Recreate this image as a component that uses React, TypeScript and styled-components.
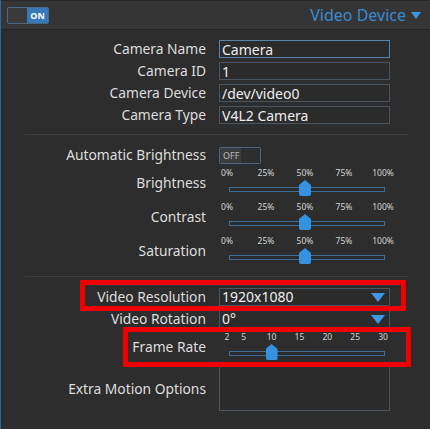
import React from 'react';
import styled, { createGlobalStyle } from 'styled-components';

const GlobalStyle = createGlobalStyle`
  html, body { margin: 0; padding: 0; background: #2d2d2d; }
  body { font-family: "Noto Sans", "Open Sans", sans-serif; }
  * { box-sizing: border-box; }
`;

const Page = styled.div`
  position: relative;
  width: 430px;
  height: 429px;
  background: #2d2d2d;
  border-left: 1px solid #2a66a8;
  overflow: hidden;
`;

const Header = styled.div`
  height: 30px;
  display: flex;
  align-items: center;
  justify-content: space-between;
  padding: 0 9px 0 6px;
  background: #353535;
  border-top: 1px solid #282828;
  border-bottom: 1px solid #242424;
`;

const Toggle = styled.div`
  width: 42px;
  height: 17px;
  display: flex;
  border: 1px solid #4a6784;
  border-radius: 2px;
  overflow: hidden;
`;

const ToggleKnob = styled.div<{ $on?: boolean }>`
  flex: 1;
  background: ${p => (p.$on ? '#3a3a3a' : '#2e2e2e')};
`;

const ToggleText = styled.div<{ $on?: boolean }>`
  width: 21px;
  display: flex;
  align-items: center;
  justify-content: ${p => (p.$on ? 'center' : 'flex-start')};
  padding-left: ${p => (p.$on ? '0' : '3px')};
  font-size: 9px;
  font-weight: ${p => (p.$on ? 700 : 400)};
  color: ${p => (p.$on ? '#ffffff' : '#bdbdbd')};
  background: ${p => (p.$on ? '#3778ba' : '#3c3c3c')};
  line-height: 1;
`;

const Title = styled.div`
  display: flex;
  align-items: center;
  gap: 5px;
  font-size: 16px;
  color: #3a8ad2;
  line-height: 1;
`;

const DownArrow = styled.span<{ $w: number; $h: number }>`
  display: inline-block;
  width: 0;
  height: 0;
  border-left: ${p => p.$w / 2}px solid transparent;
  border-right: ${p => p.$w / 2}px solid transparent;
  border-top: ${p => p.$h}px solid #3d97e2;
`;

const Body = styled.div`
  padding-top: 8px;
`;

const Section = styled.div<{ $first?: boolean }>`
  padding-top: ${p => (p.$first ? 0 : 9)}px;
  padding-bottom: 8px;
`;

const Separator = styled.div`
  height: 1px;
  margin: 0 22px 0 24px;
  background: #3e3e3e;
`;

const Row = styled.div<{ $h: number }>`
  display: grid;
  grid-template-columns: 205px 171px;
  column-gap: 13px;
  align-items: center;
  height: ${p => p.$h}px;
`;

const Label = styled.div`
  text-align: right;
  font-size: 13.8px;
  line-height: 1;
  color: #dedede;
  white-space: nowrap;
`;

const TextInput = styled.input<{ $focus?: boolean }>`
  width: 171px;
  height: 18px;
  margin: 0;
  padding: 0 2px;
  border: 1px solid ${p => (p.$focus ? '#5a83a8' : '#4a5562')};
  background: #2b2b2b;
  color: #eeeeee;
  font-family: inherit;
  font-size: 14px;
  line-height: 16px;
  outline: none;
`;

const SelectBox = styled.div`
  width: 171px;
  height: 18px;
  display: flex;
  align-items: center;
  justify-content: space-between;
  padding: 0 4px 0 2px;
  border: 1px solid #4a5562;
  background: #2b2b2b;
  color: #eeeeee;
  font-size: 14px;
  line-height: 1;
`;

const TextAreaBox = styled.div`
  width: 171px;
  height: 45px;
  border: 1px solid #4a5562;
  background: #2b2b2b;
`;

const SliderBox = styled.div`
  width: 171px;
  height: 34px;
  display: flex;
  flex-direction: column;
`;

const Scale = styled.div`
  position: relative;
  margin-left: 8px;
  width: 156px;
`;

const TickRow = styled(Scale)`
  height: 14px;
`;

const Tick = styled.span`
  position: absolute;
  top: 0;
  transform: translateX(-50%);
  font-size: 8.5px;
  line-height: 14px;
  color: #d4d4d4;
  white-space: nowrap;
`;

const TrackArea = styled(Scale)`
  height: 20px;
  padding-top: 7px;
`;

const Track = styled.div`
  margin-left: 2px;
  width: 156px;
  height: 5px;
  border: 1px solid #3f6d96;
  background: #2a2a2a;
`;

const Thumb = styled.div`
  position: absolute;
  top: 0;
  width: 12px;
  height: 16px;
  transform: translateX(-50%);
  background: #3592e0;
  clip-path: polygon(50% 0, 100% 32%, 100% 100%, 0 100%, 0 32%);
  border-radius: 0 0 2px 2px;
`;

const Annotation = styled.div<{ $x: number; $y: number; $w: number; $h: number }>`
  position: absolute;
  left: ${p => p.$x}px;
  top: ${p => p.$y}px;
  width: ${p => p.$w}px;
  height: ${p => p.$h}px;
  border: 5px solid #ee0000;
  pointer-events: none;
`;

type SliderProps = { ticks: { label: string; value: number }[]; min: number; max: number; value: number };

const Slider: React.FC<SliderProps> = ({ ticks, min, max, value }) => {
  const pct = (v: number) => `${((v - min) / (max - min)) * 100}%`;
  return (
    <SliderBox>
      <TickRow>
        {ticks.map(t => (
          <Tick key={t.label} style={{ left: pct(t.value) }}>
            {t.label}
          </Tick>
        ))}
      </TickRow>
      <TrackArea>
        <Track />
        <Thumb style={{ left: pct(value) }} />
      </TrackArea>
    </SliderBox>
  );
};

const percentTicks = [0, 25, 50, 75, 100].map(v => ({ label: `${v}%`, value: v }));
const fpsTicks = [2, 5, 10, 15, 20, 25, 30].map(v => ({ label: `${v}`, value: v }));

export default function App() {
  return (
    <>
      <GlobalStyle />
      <Page>
        <Header>
          <Toggle>
            <ToggleKnob $on />
            <ToggleText $on>ON</ToggleText>
          </Toggle>
          <Title>
            Video Device
            <DownArrow $w={11} $h={7} />
          </Title>
        </Header>
        <Body>
          <Section $first>
            <Row $h={22}>
              <Label>Camera Name</Label>
              <TextInput $focus defaultValue="Camera" />
            </Row>
            <Row $h={22}>
              <Label>Camera ID</Label>
              <TextInput defaultValue="1" />
            </Row>
            <Row $h={22}>
              <Label>Camera Device</Label>
              <TextInput defaultValue="/dev/video0" />
            </Row>
            <Row $h={22}>
              <Label>Camera Type</Label>
              <TextInput defaultValue="V4L2 Camera" />
            </Row>
          </Section>
          <Separator />
          <Section>
            <Row $h={22}>
              <Label>Automatic Brightness</Label>
              <Toggle>
                <ToggleText>OFF</ToggleText>
                <ToggleKnob />
              </Toggle>
            </Row>
            <Row $h={34}>
              <Label>Brightness</Label>
              <Slider ticks={percentTicks} min={0} max={100} value={50} />
            </Row>
            <Row $h={34}>
              <Label>Contrast</Label>
              <Slider ticks={percentTicks} min={0} max={100} value={50} />
            </Row>
            <Row $h={34}>
              <Label>Saturation</Label>
              <Slider ticks={percentTicks} min={0} max={100} value={50} />
            </Row>
          </Section>
          <Separator />
          <Section>
            <Row $h={22}>
              <Label>Video Resolution</Label>
              <SelectBox>
                <span>1920x1080</span>
                <DownArrow $w={15} $h={9} />
              </SelectBox>
            </Row>
            <Row $h={22}>
              <Label>Video Rotation</Label>
              <SelectBox>
                <span>0°</span>
                <DownArrow $w={15} $h={9} />
              </SelectBox>
            </Row>
            <Row $h={34}>
              <Label>Frame Rate</Label>
              <Slider ticks={fpsTicks} min={2} max={30} value={10} />
            </Row>
            <Row $h={49}>
              <Label>Extra Motion Options</Label>
              <TextAreaBox />
            </Row>
          </Section>
        </Body>
        <Annotation $x={79} $y={280} $w={326} $h={31} />
        <Annotation $x={122} $y={327} $w={288} $h={40} />
      </Page>
    </>
  );
}
